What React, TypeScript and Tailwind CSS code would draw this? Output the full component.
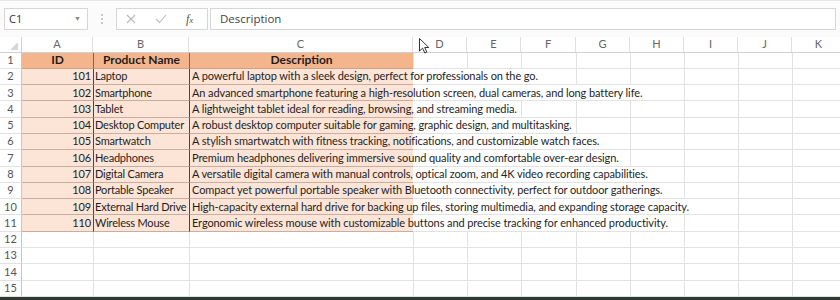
import React from 'react'

const rows = [
  { id: 101, name: 'Laptop', desc: 'A powerful laptop with a sleek design, perfect for professionals on the go.', span: 3 },
  { id: 102, name: 'Smartphone', desc: 'An advanced smartphone featuring a high-resolution screen, dual cameras, and long battery life.', span: 5 },
  { id: 103, name: 'Tablet', desc: 'A lightweight tablet ideal for reading, browsing, and streaming media.', span: 2 },
  { id: 104, name: 'Desktop Computer', desc: 'A robust desktop computer suitable for gaming, graphic design, and multitasking.', span: 3 },
  { id: 105, name: 'Smartwatch', desc: 'A stylish smartwatch with fitness tracking, notifications, and customizable watch faces.', span: 4 },
  { id: 106, name: 'Headphones', desc: 'Premium headphones delivering immersive sound quality and comfortable over-ear design.', span: 4 },
  { id: 107, name: 'Digital Camera', desc: 'A versatile digital camera with manual controls, optical zoom, and 4K video recording capabilities.', span: 5 },
  { id: 108, name: 'Portable Speaker', desc: 'Compact yet powerful portable speaker with Bluetooth connectivity, perfect for outdoor gatherings.', span: 5 },
  { id: 109, name: 'External Hard Drive', desc: 'High-capacity external hard drive for backing up files, storing multimedia, and expanding storage capacity.', span: 6 },
  { id: 110, name: 'Wireless Mouse', desc: 'Ergonomic wireless mouse with customizable buttons and precise tracking for enhanced productivity.', span: 5 },
]

const extraCols = [
  { l: 'D', w: 'w-[54px]' },
  { l: 'E', w: 'w-[54px]' },
  { l: 'F', w: 'w-[55px]' },
  { l: 'G', w: 'w-[54px]' },
  { l: 'H', w: 'w-[54px]' },
  { l: 'I', w: 'w-[54px]' },
  { l: 'J', w: 'w-[54px]' },
  { l: 'K', w: 'w-[54px]' },
]

function RowHead({ n }: { n: number }) {
  return (
    <div className="w-[22px] shrink-0 flex items-center justify-center text-[11px] tracking-normal font-normal text-[#555] border-r border-[#c6c6c6] border-b border-b-[#e2e2e2] bg-white">
      {n}
    </div>
  )
}

function EmptyCells({ span = 0 }: { span?: number }) {
  return (
    <>
      {extraCols.map((c, i) => (
        <div
          key={c.l}
          className={`${c.w} shrink-0 border-b border-[#e2e2e2] ${i < span ? '' : 'border-l border-l-[#e2e2e2]'}`}
        />
      ))}
    </>
  )
}

export default function App() {
  return (
    <div className="w-[840px] h-[300px] overflow-hidden bg-white relative font-['Lato','Liberation_Sans',sans-serif] text-[#1e1e1e]">
      {/* formula bar */}
      <div className="h-[37px] flex items-center gap-[2px] px-[4px] border-t border-[#e6e6e6] bg-[#fbfbfb] font-['Open_Sans','Liberation_Sans',sans-serif]">
        <div className="w-[84px] h-[22px] flex items-center justify-between pl-[4px] pr-[6px] bg-white border border-[#d6d6d6] text-[11px] text-[#333]">
          <span>C1</span>
          <span className="text-[7px] text-[#888]">▼</span>
        </div>
        <div className="w-[24px] flex flex-col items-center gap-[2px]">
          <span className="w-[2px] h-[2px] bg-[#c8c8c8]" />
          <span className="w-[2px] h-[2px] bg-[#c8c8c8]" />
          <span className="w-[2px] h-[2px] bg-[#c8c8c8]" />
        </div>
        <div className="w-[92px] h-[22px] flex items-center gap-[19px] pl-[9px] bg-white border border-[#d6d6d6]">
          <svg width="10" height="10" viewBox="0 0 10 10" stroke="#b9b9b9" strokeWidth="1.1"><path d="M1 1L9 9M9 1L1 9" /></svg>
          <svg width="12" height="10" viewBox="0 0 12 10" stroke="#b9b9b9" strokeWidth="1.1" fill="none"><path d="M1 5L4.5 8.5L11 1" /></svg>
          <span className="font-['Liberation_Serif',serif] italic text-[12px] text-[#555]">f<span className="text-[9px]">x</span></span>
        </div>
        <div className="flex-1 h-[22px] flex items-center pl-[9px] bg-white border border-[#d6d6d6] text-[11.5px] text-[#444]">
          Description
        </div>
      </div>

      {/* column headers */}
      <div className="flex h-[15.5px] text-[11px] text-[#666] border-b border-[#d0d0d0] bg-white">
        <div className="w-[22px] shrink-0 border-r border-[#d0d0d0] flex items-end justify-end pr-[3px] pb-[2px]">
          <svg width="8" height="8" viewBox="0 0 8 8"><path d="M8 0V8H0Z" fill="#d6d6d6" /></svg>
        </div>
        <div className="w-[71px] shrink-0 border-r border-[#e0e0e0] flex items-center justify-center">A</div>
        <div className="w-[96px] shrink-0 border-r border-[#e0e0e0] flex items-center justify-center">B</div>
        <div className="w-[224px] shrink-0 border-r border-[#e0e0e0] flex items-center justify-center">C</div>
        {extraCols.map(c => (
          <div key={c.l} className={`${c.w} shrink-0 border-r border-[#e0e0e0] flex items-center justify-center`}>{c.l}</div>
        ))}
      </div>

      {/* header row */}
      <div className="flex h-[16.3px] text-[12px]">
        <RowHead n={1} />
        <div className="w-[71px] shrink-0 bg-[#f5b58c] border-b border-[#c9a38a] flex items-center justify-center font-bold">ID</div>
        <div className="w-[96px] shrink-0 bg-[#f5b58c] border-l border-[#7b655a] border-b border-b-[#c9a38a] flex items-center justify-center font-bold">Product Name</div>
        <div className="w-[224px] shrink-0 bg-[#f5b58c] border-l border-[#7b655a] border-b border-b-[#c9a38a] flex items-center justify-center font-bold">Description</div>
        <EmptyCells />
      </div>

      {rows.map((r, i) => (
        <div key={r.id} className="flex h-[16.3px] text-[11px] tracking-[-0.1px]">
          <RowHead n={i + 2} />
          <div className="w-[71px] shrink-0 bg-[#fce4d6] border-b border-[#c9ada0] flex items-center justify-end pr-[2px]">{r.id}</div>
          <div className="w-[96px] shrink-0 bg-[#fce4d6] border-l border-[#4e4440] border-b border-b-[#c9ada0] flex items-center pl-[1px] whitespace-nowrap overflow-hidden tracking-[-0.2px]">{r.name}</div>
          <div className="w-[224px] shrink-0 bg-[#fce4d6] border-l border-[#4e4440] border-b border-b-[#c9ada0] flex items-center pl-[2px] whitespace-nowrap">{r.desc}</div>
          <EmptyCells span={r.span} />
        </div>
      ))}

      {[12, 13, 14, 15].map(n => (
        <div key={n} className="flex h-[16.3px]">
          <RowHead n={n} />
          <div className="w-[71px] shrink-0 border-b border-[#e2e2e2]" />
          <div className="w-[96px] shrink-0 border-l border-[#e2e2e2] border-b border-b-[#e2e2e2]" />
          <div className="w-[224px] shrink-0 border-l border-[#e2e2e2] border-b border-b-[#e2e2e2]" />
          <EmptyCells />
        </div>
      ))}

      <div className="h-[4px] bg-[#2f3b33]" />

      {/* mouse pointer */}
      <svg className="absolute left-[419px] top-[38px]" width="11" height="16" viewBox="0 0 11 16">
        <path d="M0.5 0.5V13L3.6 10.2L5.8 15L7.8 14.1L5.7 9.5H9.8Z" fill="#fff" stroke="#333" strokeWidth="1" strokeLinejoin="round" />
      </svg>
    </div>
  )
}
